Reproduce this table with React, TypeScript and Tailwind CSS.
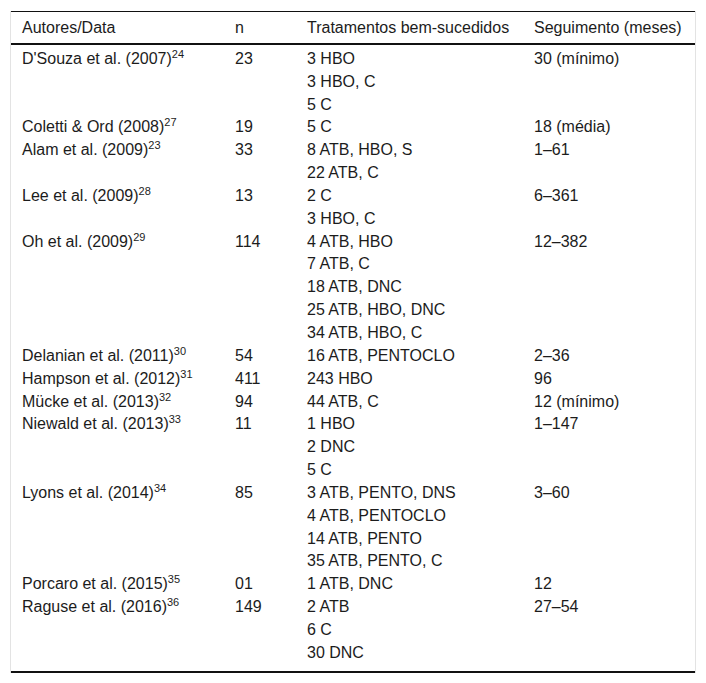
type Row = {
  autor: string;
  ref: string;
  n: string;
  tratamentos: string[];
  seguimento: string;
};

const rows: Row[] = [
  { autor: "D'Souza et al. (2007)", ref: "24", n: "23", tratamentos: ["3 HBO", "3 HBO, C", "5 C"], seguimento: "30 (mínimo)" },
  { autor: "Coletti & Ord (2008)", ref: "27", n: "19", tratamentos: ["5 C"], seguimento: "18 (média)" },
  { autor: "Alam et al. (2009)", ref: "23", n: "33", tratamentos: ["8 ATB, HBO, S", "22 ATB, C"], seguimento: "1–61" },
  { autor: "Lee et al. (2009)", ref: "28", n: "13", tratamentos: ["2 C", "3 HBO, C"], seguimento: "6–361" },
  {
    autor: "Oh et al. (2009)",
    ref: "29",
    n: "114",
    tratamentos: ["4 ATB, HBO", "7 ATB, C", "18 ATB, DNC", "25 ATB, HBO, DNC", "34 ATB, HBO, C"],
    seguimento: "12–382",
  },
  { autor: "Delanian et al. (2011)", ref: "30", n: "54", tratamentos: ["16 ATB, PENTOCLO"], seguimento: "2–36" },
  { autor: "Hampson et al. (2012)", ref: "31", n: "411", tratamentos: ["243 HBO"], seguimento: "96" },
  { autor: "Mücke et al. (2013)", ref: "32", n: "94", tratamentos: ["44 ATB, C"], seguimento: "12 (mínimo)" },
  { autor: "Niewald et al. (2013)", ref: "33", n: "11", tratamentos: ["1 HBO", "2 DNC", "5 C"], seguimento: "1–147" },
  {
    autor: "Lyons et al. (2014)",
    ref: "34",
    n: "85",
    tratamentos: ["3 ATB, PENTO, DNS", "4 ATB, PENTOCLO", "14 ATB, PENTO", "35 ATB, PENTO, C"],
    seguimento: "3–60",
  },
  { autor: "Porcaro et al. (2015)", ref: "35", n: "01", tratamentos: ["1 ATB, DNC"], seguimento: "12" },
  { autor: "Raguse et al. (2016)", ref: "36", n: "149", tratamentos: ["2 ATB", "6 C", "30 DNC"], seguimento: "27–54" },
];

const cell = "px-[11px]";

export default function App() {
  return (
    <div className="min-h-screen bg-white pt-[11px] pl-[10px] [font-family:'Liberation_Sans',Arial,sans-serif] text-[16px] leading-[22.85px] text-[#1c1c1c]">
      <div className="w-[686px] border-x border-[#e3e3e3]">
        <table className="w-[684px] table-fixed border-collapse text-left">
          <colgroup>
            <col className="w-[213px]" />
            <col className="w-[72px]" />
            <col className="w-[227px]" />
            <col className="w-[172px]" />
          </colgroup>
          <thead>
            <tr className="border-t border-b-2 border-t-[#111] border-b-[#111]">
              <th className={`${cell} pt-[5px] pb-[3px] font-normal`}>Autores/Data</th>
              <th className={`${cell} pt-[5px] pb-[3px] font-normal`}>n</th>
              <th className={`${cell} pt-[5px] pb-[3px] font-normal`}>Tratamentos bem-sucedidos</th>
              <th className={`${cell} pt-[5px] pb-[3px] font-normal`}>Seguimento (meses)</th>
            </tr>
          </thead>
          <tbody className="border-b-2 border-[#111]">
            {rows.map((r, i) => {
              const pad = i === 0 ? "pt-[3px]" : i === rows.length - 1 ? "pb-[6px]" : "";
              return (
                <tr key={r.autor} className="align-top">
                  <td className={`${cell} ${pad}`}>
                    {r.autor}
                    <sup className="relative -top-[6px] text-[11px] leading-none">{r.ref}</sup>
                  </td>
                  <td className={`${cell} ${pad}`}>{r.n}</td>
                  <td className={`${cell} ${pad}`}>
                    {r.tratamentos.map((t) => (
                      <div key={t}>{t}</div>
                    ))}
                  </td>
                  <td className={`${cell} ${pad}`}>{r.seguimento}</td>
                </tr>
              );
            })}
          </tbody>
        </table>
      </div>
    </div>
  );
}
